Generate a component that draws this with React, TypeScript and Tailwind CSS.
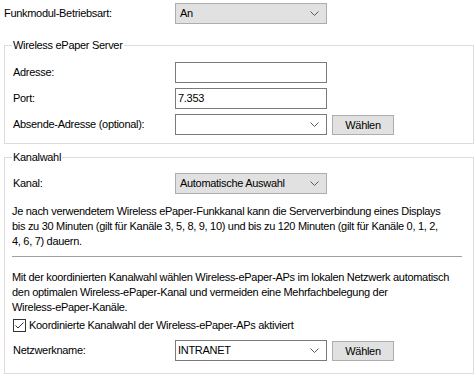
import React from "react";

function Chevron() {
  return (
    <svg width="9" height="5" viewBox="0 0 9 5" className="shrink-0">
      <polyline points="0.5,0.5 4.5,4.5 8.5,0.5" fill="none" stroke="#5a5a5a" strokeWidth="1" />
    </svg>
  );
}

function GraySelect({ value }: { value: string }) {
  return (
    <div className="w-[152px] h-[21px] border border-[#adadad] bg-[#e1e1e1] flex items-center justify-between pl-[4px] pr-[7px]">
      <span>{value}</span>
      <Chevron />
    </div>
  );
}

function EditSelect({ value }: { value: string }) {
  return (
    <div className="w-[152px] h-[21px] border border-[#7a7a7a] bg-white flex items-center justify-between pl-[2px] pr-[7px]">
      <span>{value}</span>
      <Chevron />
    </div>
  );
}

function Input({ value }: { value: string }) {
  return (
    <div className="w-[152px] h-[21px] border border-[#7a7a7a] bg-white flex items-center pl-[2px]">
      <span>{value}</span>
    </div>
  );
}

function Button({ label }: { label: string }) {
  return (
    <div className="ml-[5px] w-[62px] h-[20px] border border-[#adadad] bg-[#e1e1e1] flex items-center justify-center self-end">
      {label}
    </div>
  );
}

function Group({ title, className, children }: { title: string; className: string; children: React.ReactNode }) {
  return (
    <div className={`relative ml-[4px] w-[470px] border border-[#dcdcdc] pl-[8px] ${className}`}>
      <span className="absolute left-[7px] top-[-8px] bg-white px-[1px] leading-[15px]">{title}</span>
      {children}
    </div>
  );
}

export default function App() {
  return (
    <div className="w-[476px] h-[376px] bg-white text-black text-[11px] tracking-[-0.3px] font-['Liberation_Sans',Arial,sans-serif] pt-[3px] overflow-hidden">
      <div className="flex items-center h-[21px] pl-[4px]">
        <span className="w-[171px]">Funkmodul-Betriebsart:</span>
        <GraySelect value="An" />
      </div>

      <Group title="Wireless ePaper Server" className="mt-[21px] pt-[16px] pb-[8px]">
        <div className="flex flex-col gap-[5px]">
          <div className="flex items-center h-[21px]">
            <span className="w-[162px]">Adresse:</span>
            <Input value="" />
          </div>
          <div className="flex items-center h-[21px]">
            <span className="w-[162px]">Port:</span>
            <Input value="7.353" />
          </div>
          <div className="flex items-center h-[21px]">
            <span className="w-[162px]">Absende-Adresse (optional):</span>
            <EditSelect value="" />
            <Button label="Wählen" />
          </div>
        </div>
      </Group>

      <Group title="Kanalwahl" className="mt-[13px] pt-[15px] pb-[12px]">
        <div className="flex items-center h-[21px]">
          <span className="w-[162px]">Kanal:</span>
          <GraySelect value="Automatische Auswahl" />
        </div>
        <p className="mt-[10px] leading-[15px] whitespace-nowrap -ml-px">
          Je nach verwendetem Wireless ePaper-Funkkanal kann die Serververbindung eines Displays
          <br />
          bis zu 30 Minuten (gilt für Kanäle 3, 5, 8, 9, 10) und bis zu 120 Minuten (gilt für Kanäle 0, 1, 2,
          <br />
          4, 6, 7) dauern.
        </p>
        <div className="mt-[7px] -ml-px w-[450px] h-px bg-[#a0a0a0]" />
        <p className="mt-[13px] leading-[15px] whitespace-nowrap -ml-px">
          Mit der koordinierten Kanalwahl wählen Wireless-ePaper-APs im lokalen Netzwerk automatisch
          <br />
          den optimalen Wireless-ePaper-Kanal und vermeiden eine Mehrfachbelegung der
          <br />
          Wireless-ePaper-Kanäle.
        </p>
        <div className="mt-[4px] flex items-center h-[13px]">
          <div className="w-[13px] h-[13px] border border-[#333333] bg-white flex items-center justify-center">
            <svg width="11" height="11" viewBox="0 0 11 11">
              <polyline points="1.5,5.5 4,8 9.5,2.5" fill="none" stroke="#333333" strokeWidth="1" />
            </svg>
          </div>
          <span className="ml-[3px]">Koordinierte Kanalwahl der Wireless-ePaper-APs aktiviert</span>
        </div>
        <div className="mt-[8px] flex items-center h-[21px]">
          <span className="w-[162px]">Netzwerkname:</span>
          <EditSelect value="INTRANET" />
          <Button label="Wählen" />
        </div>
      </Group>
    </div>
  );
}
